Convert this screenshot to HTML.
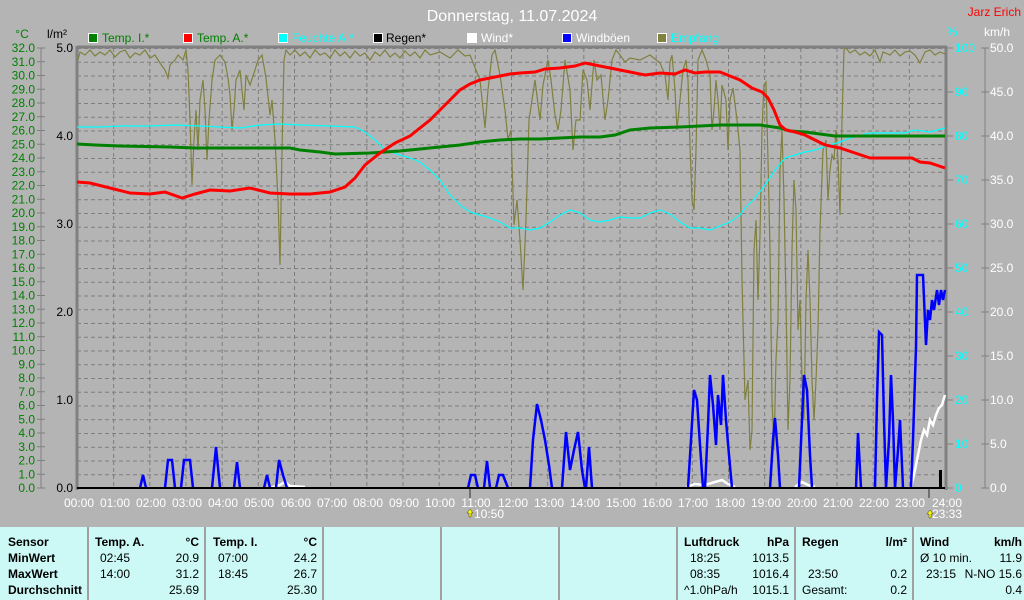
<!DOCTYPE html>
<html><head><meta charset="utf-8"><style>
html,body{margin:0;padding:0;width:1024px;height:600px;overflow:hidden;background:#b4b4b4;font-family:"Liberation Sans",sans-serif}
svg{display:block;position:absolute;left:0;top:0}
.tbl{position:absolute;left:0;top:527px;width:1024px;height:73px;background:#ccf9f6}
.tbl .v{position:absolute;top:0;width:2px;height:73px;background:#a0a0a0}
.t{position:absolute;font-size:12px;color:#000;white-space:nowrap;line-height:14px}
.b{font-weight:bold}
.r{text-align:right}
</style></head><body>
<svg width="1024" height="527" viewBox="0 0 1024 527" font-family="Liberation Sans, sans-serif" font-size="12">
<defs>
<pattern id="hg" patternUnits="userSpaceOnUse" x="77" y="48" width="868" height="13.75"><line x1="0" y1="0.5" x2="868" y2="0.5" stroke="#7c7c7c" stroke-width="1" stroke-dasharray="4,3"/></pattern>
<pattern id="vg" patternUnits="userSpaceOnUse" x="77" y="48" width="36.1667" height="440"><line x1="0.5" y1="0" x2="0.5" y2="440" stroke="#7c7c7c" stroke-width="1" stroke-dasharray="4,3"/></pattern>
</defs>
<rect x="0" y="0" width="1024" height="527" fill="#b4b4b4"/>
<rect x="77" y="48" width="868" height="440" fill="url(#hg)"/>
<rect x="77" y="48" width="868" height="440" fill="url(#vg)"/>
<!-- frame -->
<line x1="77" y1="47" x2="947" y2="47" stroke="#808080" stroke-width="3"/>
<line x1="77" y1="46" x2="77" y2="490" stroke="#808080" stroke-width="3"/>
<line x1="946" y1="46" x2="946" y2="490" stroke="#808080" stroke-width="3"/>
<line x1="470" y1="488" x2="470" y2="498" stroke="#707070" stroke-width="2"/>
<line x1="929" y1="488" x2="929" y2="498" stroke="#707070" stroke-width="2"/>

<text x="512" y="21" fill="#fff" font-size="16" text-anchor="middle">Donnerstag, 11.07.2024</text>
<text x="1021" y="16" fill="#f00" text-anchor="end">Jarz Erich</text>
<text x="22" y="38" fill="#008000" text-anchor="middle">°C</text>
<text x="57" y="38" fill="#000" text-anchor="middle">l/m²</text>
<text x="952" y="36" fill="#0ff" text-anchor="middle">%</text>
<text x="997" y="36" fill="#fff" text-anchor="middle">km/h</text>

<!-- legend -->
<g stroke="#fff" stroke-width="1">
<rect x="88.5" y="33.5" width="9" height="9" fill="#008000"/>
<rect x="183.5" y="33.5" width="9" height="9" fill="#f00"/>
<rect x="278.5" y="33.5" width="9" height="9" fill="#0ff"/>
<rect x="373.5" y="33.5" width="9" height="9" fill="#000"/>
<rect x="467.5" y="33.5" width="9" height="9" fill="#fff"/>
<rect x="562.5" y="33.5" width="9" height="9" fill="#00f"/>
<rect x="657.5" y="33.5" width="9" height="9" fill="#808040"/>
</g>
<text x="102" y="42" fill="#008000">Temp. I.*</text>
<text x="197" y="42" fill="#008000">Temp. A.*</text>
<text x="292" y="42" fill="#0ff">Feuchte A.*</text>
<text x="386" y="42" fill="#000">Regen*</text>
<text x="481" y="42" fill="#fff">Wind*</text>
<text x="576" y="42" fill="#fff">Windböen</text>
<text x="671" y="42" fill="#0ff">Empfang</text>

<!-- left axis -->
<line x1="41" y1="48" x2="41" y2="488" stroke="#808080"/>
<g stroke="#808080">
<path d="M37 48H45M37 61.75H45M37 75.5H45M37 89.25H45M37 103H45M37 116.75H45M37 130.5H45M37 144.25H45M37 158H45M37 171.75H45M37 185.5H45M37 199.25H45M37 213H45M37 226.75H45M37 240.5H45M37 254.25H45M37 268H45M37 281.75H45M37 295.5H45M37 309.25H45M37 323H45M37 336.75H45M37 350.5H45M37 364.25H45M37 378H45M37 391.75H45M37 405.5H45M37 419.25H45M37 433H45M37 446.75H45M37 460.5H45M37 474.25H45M37 488H45"/>
</g>
<g fill="#008000" text-anchor="end">
<text x="35" y="52">32.0</text><text x="35" y="65.75">31.0</text><text x="35" y="79.5">30.0</text><text x="35" y="93.25">29.0</text><text x="35" y="107">28.0</text><text x="35" y="120.75">27.0</text><text x="35" y="134.5">26.0</text><text x="35" y="148.25">25.0</text><text x="35" y="162">24.0</text><text x="35" y="175.75">23.0</text><text x="35" y="189.5">22.0</text><text x="35" y="203.25">21.0</text><text x="35" y="217">20.0</text><text x="35" y="230.75">19.0</text><text x="35" y="244.5">18.0</text><text x="35" y="258.25">17.0</text><text x="35" y="272">16.0</text><text x="35" y="285.75">15.0</text><text x="35" y="299.5">14.0</text><text x="35" y="313.25">13.0</text><text x="35" y="327">12.0</text><text x="35" y="340.75">11.0</text><text x="35" y="354.5">10.0</text><text x="35" y="368.25">9.0</text><text x="35" y="382">8.0</text><text x="35" y="395.75">7.0</text><text x="35" y="409.5">6.0</text><text x="35" y="423.25">5.0</text><text x="35" y="437">4.0</text><text x="35" y="450.75">3.0</text><text x="35" y="464.5">2.0</text><text x="35" y="478.25">1.0</text><text x="35" y="492">0.0</text>
</g>
<g fill="#000" text-anchor="end">
<text x="73" y="52">5.0</text><text x="73" y="140">4.0</text><text x="73" y="228">3.0</text><text x="73" y="316">2.0</text><text x="73" y="404">1.0</text><text x="73" y="492">0.0</text>
</g>
<!-- right axes -->
<g stroke="#808080"><path d="M947 48H953M947 92H953M947 136H953M947 180H953M947 224H953M947 268H953M947 312H953M947 356H953M947 400H953M947 444H953M947 488H953"/></g>
<g fill="#0ff">
<text x="955" y="52">100</text><text x="955" y="96">90</text><text x="955" y="140">80</text><text x="955" y="184">70</text><text x="955" y="228">60</text><text x="955" y="272">50</text><text x="955" y="316">40</text><text x="955" y="360">30</text><text x="955" y="404">20</text><text x="955" y="448">10</text><text x="955" y="492">0</text>
</g>
<line x1="985" y1="48" x2="985" y2="488" stroke="#808080"/>
<g stroke="#808080"><path d="M981 48H989M981 92H989M981 136H989M981 180H989M981 224H989M981 268H989M981 312H989M981 356H989M981 400H989M981 444H989M981 488H989"/></g>
<g fill="#fff">
<text x="990" y="52">50.0</text><text x="990" y="96">45.0</text><text x="990" y="140">40.0</text><text x="990" y="184">35.0</text><text x="990" y="228">30.0</text><text x="990" y="272">25.0</text><text x="990" y="316">20.0</text><text x="990" y="360">15.0</text><text x="990" y="404">10.0</text><text x="990" y="448">5.0</text><text x="990" y="492">0.0</text>
</g>
<!-- x labels -->
<g fill="#fff" text-anchor="middle">
<text x="79" y="507">00:00</text><text x="115" y="507">01:00</text><text x="151" y="507">02:00</text><text x="187" y="507">03:00</text><text x="223" y="507">04:00</text><text x="259" y="507">05:00</text><text x="296" y="507">06:00</text><text x="332" y="507">07:00</text><text x="368" y="507">08:00</text><text x="404" y="507">09:00</text><text x="440" y="507">10:00</text><text x="476" y="507">11:00</text><text x="513" y="507">12:00</text><text x="549" y="507">13:00</text><text x="585" y="507">14:00</text><text x="621" y="507">15:00</text><text x="657" y="507">16:00</text><text x="693" y="507">17:00</text><text x="730" y="507">18:00</text><text x="766" y="507">19:00</text><text x="802" y="507">20:00</text><text x="838" y="507">21:00</text><text x="874" y="507">22:00</text><text x="910" y="507">23:00</text><text x="947" y="507">24:00</text>
<text x="489" y="518">10:50</text><text x="947" y="518">23:33</text>
</g>
<path d="M470 509l-3 4h2v4h2v-4h2z" fill="#ff0" stroke="#404000" stroke-width="0.5"/>
<path d="M930 510l-3 4h2v4h2v-4h2z" fill="#ff0" stroke="#404000" stroke-width="0.5"/>

<!-- olive empfang -->
<polyline fill="none" stroke="#808040" stroke-width="1.2" points="78,60 80,52 85,55 90,50 95,56 100,52 105,55 110,50 115,57 120,52 125,50 130,58 135,53 140,55 145,50 150,58 155,55 160,63 165,70 168,78 170,65 175,60 178,55 183,60 186,50 188,70 190,120 192,185 194,140 196,110 198,150 200,100 203,80 205,110 207,160 209,120 212,80 215,60 220,55 225,62 228,78 230,95 232,130 234,110 236,80 240,70 244,110 246,75 250,85 255,70 258,60 262,55 266,78 270,115 272,100 275,140 278,200 280,265 282,150 284,60 286,50 290,55 295,50 300,56 305,52 310,58 315,50 320,55 325,53 330,58 335,50 340,56 345,52 350,58 355,51 360,56 365,53 370,60 375,52 380,56 385,50 390,57 395,53 400,58 405,51 410,56 415,52 420,58 425,50 430,55 440,52 450,58 458,50 465,56 470,55 474,65 480,80 485,128 488,90 492,55 495,50 500,75 505,110 508,140 511,130 514,225 517,200 520,240 523,290 526,220 529,120 532,100 535,80 540,120 543,85 548,60 551,80 555,115 558,130 561,110 565,60 570,90 573,150 576,120 580,120 583,70 587,80 590,110 594,60 597,80 601,75 605,120 608,100 612,60 616,50 620,55 625,62 630,58 640,60 650,55 660,63 665,75 668,100 670,62 672,55 675,90 677,130 680,100 683,70 686,60 688,80 690,145 692,200 694,210 696,150 698,60 702,50 706,60 710,75 712,130 714,110 716,80 718,100 720,130 722,85 726,100 728,150 730,100 733,88 737,120 740,150 742,280 745,400 748,380 750,450 752,430 754,250 756,220 758,300 760,235 762,130 764,85 766,82 768,160 770,250 772,400 774,450 776,360 778,320 780,170 782,130 784,200 786,300 788,430 790,380 792,250 794,180 796,210 798,330 800,300 802,380 804,420 806,300 808,250 810,300 812,380 814,420 816,380 818,330 820,230 823,150 826,140 828,200 830,170 832,155 834,160 836,130 838,160 840,215 842,120 844,50 846,48 850,53 855,50 860,55 865,52 870,56 875,50 880,62 883,52 890,55 895,50 900,56 905,52 910,51 915,55 920,63 925,52 930,50 935,55 940,52 945,54"/>
<!-- cyan humidity -->
<polyline fill="none" stroke="#0ff" stroke-width="1.2" points="77,127 100,127 120,126 150,126 175,125 200,126 240,128 260,125 280,124 300,125 330,126 355,127 365,132 375,140 385,150 400,155 410,158 420,162 430,170 440,180 450,195 460,205 470,212 480,215 490,218 500,222 510,228 520,228 530,230 540,228 550,222 560,215 570,210 580,213 590,220 600,222 610,220 620,217 630,218 640,218 650,213 660,210 670,214 680,222 690,228 700,228 710,230 720,226 730,222 740,215 745,208 755,198 765,185 775,170 785,158 795,155 805,152 815,150 830,145 840,142 850,138 870,133 890,133 905,133 915,130 930,132 945,128"/>
<!-- green temp I -->
<polyline fill="none" stroke="#008000" stroke-width="3" points="77,144 95,145 120,146 170,147 195,148 240,148 290,148 300,150 320,152 335,154 370,153 400,151 420,149 440,147 460,145 480,142 500,140 520,139 540,139 560,138 580,137 600,137 615,135 630,130 650,128 680,127 700,126 720,125 760,125 780,128 790,131 805,132 820,134 835,136 880,136 945,136"/>
<!-- red temp A -->
<polyline fill="none" stroke="#f00" stroke-width="3" points="77,182 90,183 110,188 130,193 150,194 165,192 182,198 195,194 210,190 230,191 250,188 270,193 290,194 310,194 330,192 345,187 355,178 365,165 380,153 395,143 410,136 420,128 430,120 440,110 450,100 460,90 470,84 480,80 490,78 500,76 510,74 520,73 535,72 545,69 560,68 575,66 585,63 600,66 615,69 630,72 645,75 660,73 675,74 685,70 695,73 705,72 720,72 730,76 740,80 752,88 762,92 768,98 774,110 780,125 786,130 795,132 805,135 815,140 825,145 840,148 855,153 870,158 885,158 900,158 912,158 920,162 930,163 945,168"/>
<!-- white wind -->
<path fill="none" stroke="#fff" stroke-width="2.5" d="M270,488 L280,485 L285,482 L290,486 L305,487 M686,487 L695,484 L705,485 L715,482 L722,480 L728,484 L735,487 M795,487 L802,482 L808,485 L815,487 M911,488 L915,470 L918,455 L921,440 L924,430 L927,435 L930,420 L933,425 L936,415 L939,408 L942,405 L945,395"/>
<!-- blue gusts -->
<path fill="none" stroke="#00f" stroke-width="2.5" d="M140,488 L143,475 L146,488 M165,488 L168,460 L172,460 L175,488 M181,488 L184,460 L190,460 L193,488 M212,488 L216,447 L220,488 M234,488 L237,462 L240,488 M264,488 L267,475 L270,488 M276,488 L279,460 L283,475 L287,488 M468,488 L471,475 L475,475 L478,488 M484,488 L487,461 L490,488 M496,488 L499,475 L503,475 L508,488 M530,488 L533,440 L537,404 L541,420 L545,440 L549,465 L552,488 M562,488 L566,432 L570,470 L574,450 L578,432 L582,470 L585,488 M586,488 L589,447 L592,488 M688,488 L691,440 L694,390 L697,400 L700,445 L703,488 M705,488 L708,425 L710,375 L713,405 L716,445 L718,395 L721,425 L723,375 L726,420 L729,455 L732,488 M770,488 L773,440 L775,418 L778,455 L780,488 M799,488 L802,420 L804,375 L807,390 L810,455 L812,488 M856,488 L858,433 L861,488 M875,488 L877,400 L879,332 L882,335 L884,420 L886,488 L889,440 L891,375 L893,420 L895,488 L898,450 L900,420 L903,488 M911,488 L913,440 L916,347 L917,275 L923,275 L926,345 L928,310 L930,320 L932,300 L934,310 L937,290 L939,305 L941,290 L943,300 L945,290"/>
<rect x="939" y="470" width="3" height="18" fill="#000"/>
<line x1="77" y1="488" x2="945" y2="488" stroke="#000" stroke-width="2"/>
</svg>

<div class="tbl">
<div class="v" style="left:87px"></div><div class="v" style="left:204px"></div><div class="v" style="left:322px"></div><div class="v" style="left:440px"></div><div class="v" style="left:558px"></div><div class="v" style="left:676px"></div><div class="v" style="left:794px"></div><div class="v" style="left:912px"></div>
<div class="t b" style="left:8px;top:8px">Sensor</div>
<div class="t b" style="left:8px;top:24px">MinWert</div>
<div class="t b" style="left:8px;top:40px">MaxWert</div>
<div class="t b" style="left:8px;top:56px">Durchschnitt</div>

<div class="t b" style="left:95px;top:8px">Temp. A.</div><div class="t b r" style="right:825px;top:8px">°C</div>
<div class="t" style="left:100px;top:24px">02:45</div><div class="t r" style="right:825px;top:24px">20.9</div>
<div class="t" style="left:100px;top:40px">14:00</div><div class="t r" style="right:825px;top:40px">31.2</div>
<div class="t r" style="right:825px;top:56px">25.69</div>

<div class="t b" style="left:213px;top:8px">Temp. I.</div><div class="t b r" style="right:707px;top:8px">°C</div>
<div class="t" style="left:218px;top:24px">07:00</div><div class="t r" style="right:707px;top:24px">24.2</div>
<div class="t" style="left:218px;top:40px">18:45</div><div class="t r" style="right:707px;top:40px">26.7</div>
<div class="t r" style="right:707px;top:56px">25.30</div>

<div class="t b" style="left:684px;top:8px">Luftdruck</div><div class="t b r" style="right:235px;top:8px">hPa</div>
<div class="t" style="left:690px;top:24px">18:25</div><div class="t r" style="right:235px;top:24px">1013.5</div>
<div class="t" style="left:690px;top:40px">08:35</div><div class="t r" style="right:235px;top:40px">1016.4</div>
<div class="t" style="left:684px;top:56px">^1.0hPa/h</div><div class="t r" style="right:235px;top:56px">1015.1</div>

<div class="t b" style="left:802px;top:8px">Regen</div><div class="t b r" style="right:117px;top:8px">l/m²</div>
<div class="t" style="left:808px;top:40px">23:50</div><div class="t r" style="right:117px;top:40px">0.2</div>
<div class="t" style="left:802px;top:56px">Gesamt:</div><div class="t r" style="right:117px;top:56px">0.2</div>

<div class="t b" style="left:920px;top:8px">Wind</div><div class="t b r" style="right:2px;top:8px">km/h</div>
<div class="t" style="left:920px;top:24px">Ø 10 min.</div><div class="t r" style="right:2px;top:24px">11.9</div>
<div class="t" style="left:926px;top:40px">23:15</div><div class="t r" style="right:2px;top:40px">N-NO 15.6</div>
<div class="t r" style="right:2px;top:56px">0.4</div>
</div>
</body></html>
